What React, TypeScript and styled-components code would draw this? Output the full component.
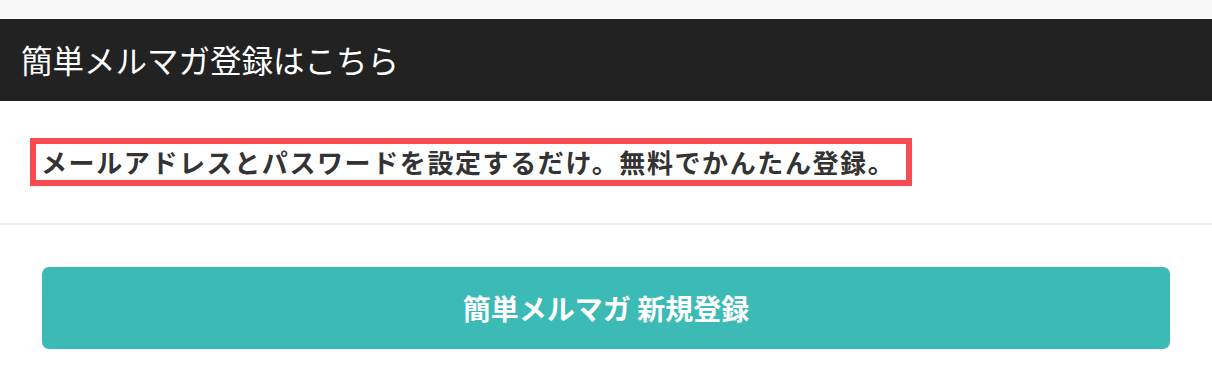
import React from "react";
import styled, { createGlobalStyle } from "styled-components";

const GlobalStyle = createGlobalStyle`
  html, body { margin: 0; padding: 0; background: #ffffff; }
  body { font-family: "Noto Sans CJK JP", "Noto Sans", sans-serif; }
`;

const Page = styled.div`
  width: 1212px;
  display: flex;
  flex-direction: column;
  background: #ffffff;
`;

const TopStrip = styled.div`
  height: 19px;
  background: #f8f8f8;
`;

const Header = styled.header`
  height: 82px;
  background: #222222;
  display: flex;
  align-items: center;
  padding-left: 21px;
`;

const Title = styled.h2`
  margin: 0;
  color: #ffffff;
  font-size: 31.5px;
  font-weight: 400;
  line-height: 1;
`;

const Lead = styled.section`
  padding: 37px 0 37px 30px;
  border-bottom: 2px solid #eeeeee;
`;

const Highlight = styled.p`
  margin: 0;
  display: inline-flex;
  align-items: center;
  height: 36px;
  padding: 0 6px 0 5px;
  border: 6px solid #f94b4f;
  color: #333333;
  font-size: 26px;
  font-weight: 700;
  letter-spacing: 1.6px;
  line-height: 1;
  width: 859px;
  white-space: nowrap;
`;

const Actions = styled.section`
  padding: 42px 42px 21px;
`;

const PrimaryButton = styled.button`
  width: 100%;
  height: 82px;
  border: none;
  border-radius: 7px;
  background: #3bbab6;
  color: #ffffff;
  font-family: "Noto Sans CJK JP", "Noto Sans", sans-serif;
  font-size: 28px;
  font-weight: 700;
  display: flex;
  align-items: center;
  justify-content: center;
  cursor: pointer;
`;

export default function App() {
  return (
    <>
      <GlobalStyle />
      <Page>
        <TopStrip />
        <Header>
          <Title>簡単メルマガ登録はこちら</Title>
        </Header>
        <Lead>
          <Highlight>メールアドレスとパスワードを設定するだけ。無料でかんたん登録。</Highlight>
        </Lead>
        <Actions>
          <PrimaryButton>簡単メルマガ 新規登録</PrimaryButton>
        </Actions>
      </Page>
    </>
  );
}
